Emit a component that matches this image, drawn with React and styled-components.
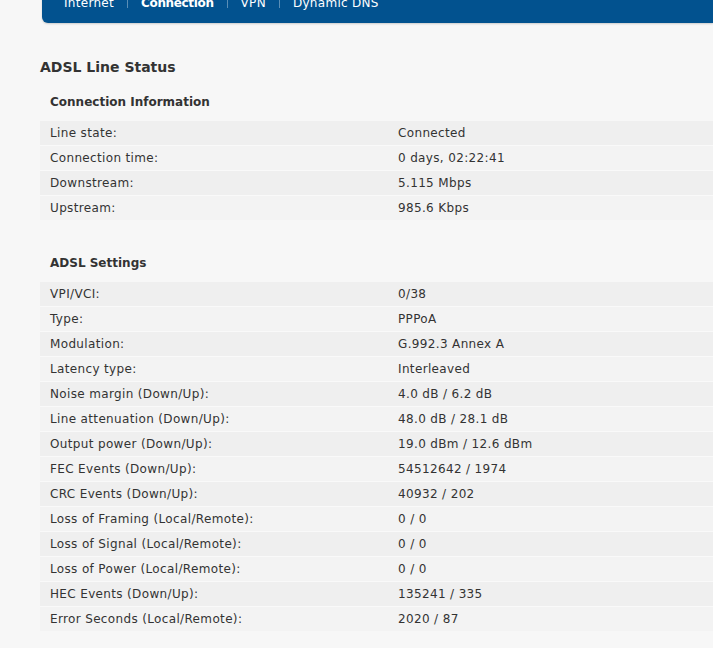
import styled, { createGlobalStyle } from "styled-components";

const GlobalStyle = createGlobalStyle`
  html, body {
    margin: 0;
    padding: 0;
    background: #f7f7f7;
    overflow: hidden;
  }
  body {
    font-family: "DejaVu Sans", Verdana, sans-serif;
    font-size: 12px;
    letter-spacing: 0.35px;
    color: #333;
  }
`;

const Page = styled.div`
  padding-left: 40px;
  min-height: 648px;
`;

const Nav = styled.nav`
  display: flex;
  margin: -14px 0 0 2px;
  padding-left: 9px;
  height: 37px;
  background: #02528f;
  border-bottom-left-radius: 6px;
  box-shadow: 0 1px 2px rgba(0, 0, 0, 0.18);
`;

const Tab = styled.a`
  display: block;
  height: 12px;
  padding: 10px 13px 0;
  line-height: 14px;
  color: #fff;
  font-weight: ${(p) => (p.$active ? 700 : 400)};
  letter-spacing: ${(p) => (p.$active ? "-0.35px" : "0.3px")};
  text-decoration: none;
  white-space: nowrap;
  border-left: ${(p) =>
    p.$first ? "none" : "1px solid rgba(255, 255, 255, 0.35)"};
`;

const Title = styled.h2`
  margin: 35px 0 0;
  font-size: 14px;
  line-height: 18px;
  font-weight: 700;
  letter-spacing: 0;
  color: #333;
`;

const SectionTitle = styled.h3`
  margin: ${(p) => p.$top}px 0 12px;
  padding-left: 10px;
  font-size: 12px;
  line-height: 14px;
  font-weight: 700;
  letter-spacing: 0;
  color: #333;
`;

const Table = styled.div`
  display: flex;
  flex-direction: column;
  gap: 1px;
  background: #f9f9f9;
`;

const Row = styled.div`
  display: grid;
  grid-template-columns: 348px 1fr;
  height: 24px;
  align-items: center;
  background: ${(p) => (p.$odd ? "#efefef" : "#f3f3f3")};
`;

const Cell = styled.div`
  padding: 0 10px;
  white-space: nowrap;
`;

const connection = [
  ["Line state:", "Connected"],
  ["Connection time:", "0 days, 02:22:41"],
  ["Downstream:", "5.115 Mbps"],
  ["Upstream:", "985.6 Kbps"],
];

const settings = [
  ["VPI/VCI:", "0/38"],
  ["Type:", "PPPoA"],
  ["Modulation:", "G.992.3 Annex A"],
  ["Latency type:", "Interleaved"],
  ["Noise margin (Down/Up):", "4.0 dB / 6.2 dB"],
  ["Line attenuation (Down/Up):", "48.0 dB / 28.1 dB"],
  ["Output power (Down/Up):", "19.0 dBm / 12.6 dBm"],
  ["FEC Events (Down/Up):", "54512642 / 1974"],
  ["CRC Events (Down/Up):", "40932 / 202"],
  ["Loss of Framing (Local/Remote):", "0 / 0"],
  ["Loss of Signal (Local/Remote):", "0 / 0"],
  ["Loss of Power (Local/Remote):", "0 / 0"],
  ["HEC Events (Down/Up):", "135241 / 335"],
  ["Error Seconds (Local/Remote):", "2020 / 87"],
];

const StatusTable = ({ rows }) => (
  <Table>
    {rows.map(([label, value], i) => (
      <Row key={label} $odd={i % 2 === 0}>
        <Cell>{label}</Cell>
        <Cell>{value}</Cell>
      </Row>
    ))}
  </Table>
);

const tabs = ["Internet", "Connection", "VPN", "Dynamic DNS"];

export default function App() {
  return (
    <>
      <GlobalStyle />
      <Page>
        <Nav>
          {tabs.map((t, i) => (
            <Tab key={t} href="#" $first={i === 0} $active={t === "Connection"}>
              {t}
            </Tab>
          ))}
        </Nav>
        <Title>ADSL Line Status</Title>
        <SectionTitle $top={19}>Connection Information</SectionTitle>
        <StatusTable rows={connection} />
        <SectionTitle $top={36}>ADSL Settings</SectionTitle>
        <StatusTable rows={settings} />
      </Page>
    </>
  );
}
